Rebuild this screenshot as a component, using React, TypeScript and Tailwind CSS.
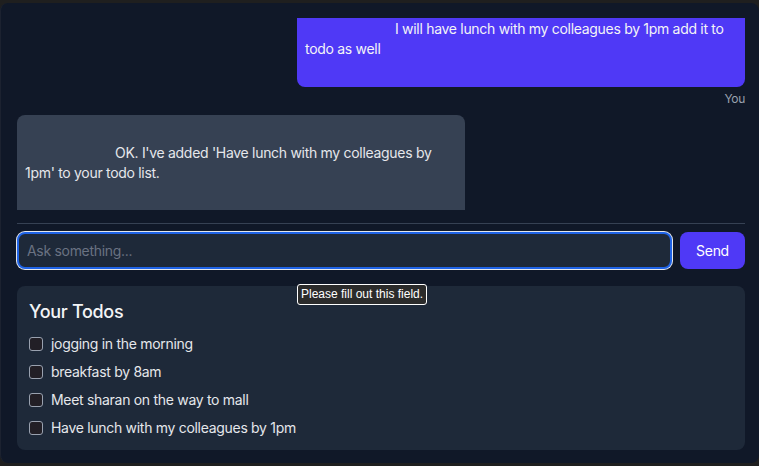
import { useState } from "react";

type Message = {
  id: number;
  role: "user" | "ai";
  text: string;
};

const messages: Message[] = [
  {
    id: 1,
    role: "user",
    text: "I will have lunch with my colleagues by 1pm add it to todo as well",
  },
  {
    id: 2,
    role: "ai",
    text: "OK. I've added 'Have lunch with my colleagues by 1pm' to your todo list.",
  },
];

const todos = [
  "jogging in the morning",
  "breakfast by 8am",
  "Meet sharan on the way to mall",
  "Have lunch with my colleagues by 1pm",
];

export default function App() {
  const [input, setInput] = useState("");

  return (
    <div
      className="w-full h-[466px] bg-[#1f1f1f] pt-[3px] overflow-hidden tracking-[-0.3px]"
      style={{ fontFamily: "Inter, 'Noto Sans', sans-serif" }}
    >
      <div className="h-[460px] rounded-lg bg-[#101828] border-l border-[#1c2230] pl-4 pr-[14px] pt-[15px] flex flex-col">
        {/* chat log, scrolled so both bubbles are cut off */}
        <div className="h-[192px] overflow-hidden">
          <div className="flex flex-col gap-2 mt-[-27px]">
            {messages.map((m) => (
              <div
                key={m.id}
                className={m.role === "user" ? "flex flex-col items-end" : "flex flex-col items-start"}
              >
                <div
                  className={
                    m.role === "user"
                      ? "max-w-md w-full rounded-lg bg-indigo-600 text-gray-100 px-2 py-2 text-sm whitespace-pre-wrap"
                      : "max-w-md w-full rounded-lg bg-gray-700 text-gray-200 px-2 pt-2 pb-6 text-sm whitespace-pre-wrap"
                  }
                >
                  {"\n"}
                  <span className="inline-block w-[90px]" />
                  {m.text}
                  {"\n\n"}
                </div>
                {m.role === "user" && <span className="mt-1 text-xs text-gray-400">You</span>}
              </div>
            ))}
          </div>
        </div>

        <form
          className="relative mt-[13px] border-t border-gray-700 pt-[8px] flex gap-2"
          onSubmit={(e) => e.preventDefault()}
        >
          <input
            value={input}
            onChange={(e) => setInput(e.target.value)}
            placeholder="Ask something..."
            required
            className="flex-1 h-[37px] rounded-lg bg-gray-800 border-2 border-[#1f63e6] shadow-[0_0_0_1px_#e5e7eb] px-2 text-sm text-gray-100 placeholder:text-gray-500 outline-none"
          />
          <button
            type="submit"
            className="h-[37px] w-[65px] rounded-lg bg-indigo-600 text-white text-sm"
          >
            Send
          </button>
          <div
            className="absolute left-[280px] top-[60px] rounded-[3px] border border-white bg-[#2b2b2b] px-[3px] py-[1px] text-[12px] leading-[17px] text-white tracking-normal"
            style={{ fontFamily: "'Liberation Sans', Arial, sans-serif" }}
          >
            Please fill out this field.
          </div>
        </form>

        <div className="mt-[17px] rounded-lg bg-gray-800 p-3">
          <h2 className="text-lg font-medium text-gray-100 mb-2">Your Todos</h2>
          <ul className="flex flex-col gap-2">
            {todos.map((t) => (
              <li key={t} className="flex items-center gap-2 text-sm text-gray-200">
                <input
                  type="checkbox"
                  className="appearance-none w-[14px] h-[14px] rounded-[3px] border border-gray-400 bg-[#221f26]"
                />
                <span>{t}</span>
              </li>
            ))}
          </ul>
        </div>
      </div>
    </div>
  );
}
